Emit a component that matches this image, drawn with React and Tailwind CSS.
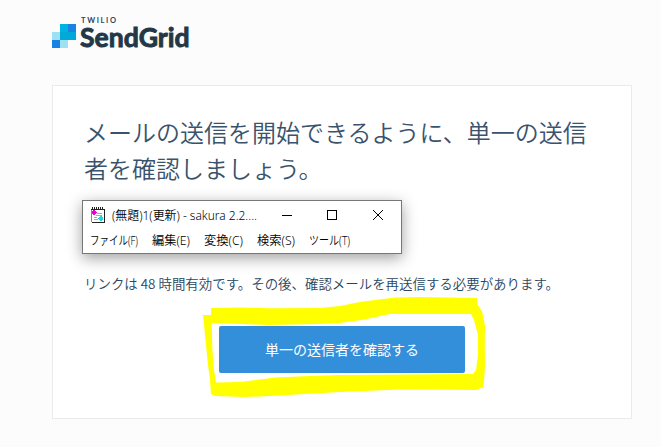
const jp = "font-['Noto_Sans_CJK_JP',sans-serif]";

function Logo() {
  return (
    <svg className="block h-[32px] w-[140px] overflow-visible" viewBox="52 17 140 32" role="img" aria-label="Twilio SendGrid">
      <g shapeRendering="crispEdges">
        <rect x="52" y="32" width="8" height="8" fill="#9de1f3" />
        <rect x="60" y="24" width="8" height="8" fill="#00b2e3" />
        <rect x="68" y="24" width="8" height="8" fill="#1a82e2" />
        <rect x="60" y="32" width="16" height="8" fill="#00a9d8" />
        <rect x="52" y="40" width="8" height="8" fill="#1a82e2" />
        <rect x="60" y="40" width="8" height="8" fill="#9de1f3" />
      </g>
      <text x="81" y="23.4" fontFamily="Lato, sans-serif" fontWeight="700" fontSize="7.5" textLength="35" fill="#294661">TWILIO</text>
      <text x="80" y="47.3" fontFamily="Lato, sans-serif" fontWeight="700" fontSize="26" textLength="109.5" lengthAdjust="spacingAndGlyphs" fill="#233746" stroke="#233746" strokeWidth="0.9">SendGrid</text>
    </svg>
  );
}

function NoteIcon() {
  return (
    <svg className="h-[16px] w-[14px]" viewBox="0 0 14 16" shapeRendering="crispEdges">
      <path d="M1 2h12v13H1z" fill="#fff" />
      <path d="M0 2h1v13H0z" fill="#888" />
      <path d="M1 0h1v3H1zM3 0h1v3H3zM5 0h1v3H5zM7 0h1v3H7zM9 0h1v3H9zM11 0h1v3h-1zM13 2h1v14h-1zM1 15h13v1H1zM0 2h14v1H0z" fill="#222" />
      <path d="M6 6h5v1H6zM5 8h6v1H5zM3 10h3v1H3zM3 12h4v1H3z" fill="#aaa" />
      <path d="M2 3h2v1h1v1h1v1H5v1H4v1H2V7H1V4h1z" fill="#f000d0" />
      <path d="M9 9h2v1h1v3h-1v1H9v-1H8v-1H7v-1h1v-1h1z" fill="#20d8d0" />
    </svg>
  );
}

const menus = [
  ["ファイル(F)", 48, 62],
  ["編集(E)", 38, 52],
  ["変換(C)", 39, 53],
  ["検索(S)", 38, 52],
  ["ツール(T)", 41, 41],
];

function EditorWindow() {
  return (
    <div className="-ml-[2px] mt-[14px] h-[54px] w-[320px] border border-[#777] bg-white shadow-[0_4px_14px_rgba(0,0,0,0.38)]">
      <div className="flex h-[28px] items-center pl-[8px] text-black">
        <NoteIcon />
        <svg className="ml-[7px] h-[20px] w-[146px] overflow-visible" viewBox="0 0 146 20">
          <text x="0" y="14.5" fontFamily="'Noto Sans', 'Noto Sans CJK JP', sans-serif" fontWeight="350" fontSize="12" textLength="145" lengthAdjust="spacingAndGlyphs">(無題)1(更新) - sakura 2.2....</text>
        </svg>
        <svg className="ml-[24px] h-[12px] w-[104px]" viewBox="0 0 104 12" fill="none" stroke="#000">
          <path d="M0 6.500h10M45.500 1.500h9v9h-9z" shapeRendering="crispEdges" />
          <path d="M91 1l10 10M101 1l-10 10" />
        </svg>
      </div>
      <div className="flex h-[24px] items-center pl-[7px]">
        {menus.map(([label, textWidth, slot]) => (
          <svg key={label} className="h-[20px] shrink-0 overflow-visible" style={{ width: slot }} viewBox={`0 0 ${slot} 20`}>
            <text x="0" y="14" fontFamily="'Noto Sans', 'Noto Sans CJK JP', sans-serif" fontWeight="350" fontSize="12" textLength={textWidth} lengthAdjust="spacingAndGlyphs">{label}</text>
          </svg>
        ))}
      </div>
    </div>
  );
}

function Highlight() {
  return (
    <svg className="pointer-events-none absolute -left-[17px] -top-[31px] h-[105px] w-[286px]" viewBox="202 295 286 105">
      <path
        fill="#ff0"
        fillRule="evenodd"
        d="M203 315h8v-7l29-.5 30 .8 50-.3 20-2 20-4 15-2 20-2.500 25-.5 57 1v6l5 7 3 15-.2 20 .2 20-1 15-1 6-6 3-77-.5-60 2.500-70 4-25 1-30-1-4-2-1-14-2-15-2-20zM211.700 323l28 1 30 1 50-1 20-1 25-3.500 25-5.500h81.300l3 6 4 15v20l-2 15-3 4h-5l-128 1-30 1-35 1.500-35 4.500-24 .5-2-12.500-1.600-20z"
      />
    </svg>
  );
}

export default function App() {
  return (
    <main lang="ja" className={`h-[447px] w-[661px] overflow-hidden bg-[#fcfcfd] pl-[52px] pt-[17px] ${jp}`}>
      <Logo />
      <section className="mt-[36px] h-[334px] w-[580px] border border-[#e9ebee] bg-white pl-[31px] pt-[28px] text-[#294661]">
        <h1 className="w-[520px] text-[24px] font-[350] leading-[36px] text-[#3a536c]">
          メールの送信を開始できるように、単一の送信
          <br />
          者を確認しましょう。
        </h1>
        <EditorWindow />
        <p className="mt-[19px] whitespace-nowrap text-[13.45px] font-[350] leading-[20px]">
          リンクは 48 時間有効です。その後、確認メールを再送信する必要があります。
        </p>
        <div className="relative ml-[135px] mt-[33px] h-[47px] w-[246px]">
          <Highlight />
          <button className="relative block h-full w-full rounded-[2px] bg-[#348fdb] text-[14px] leading-[45px] text-white">
            単一の送信者を確認する
          </button>
        </div>
      </section>
    </main>
  );
}
